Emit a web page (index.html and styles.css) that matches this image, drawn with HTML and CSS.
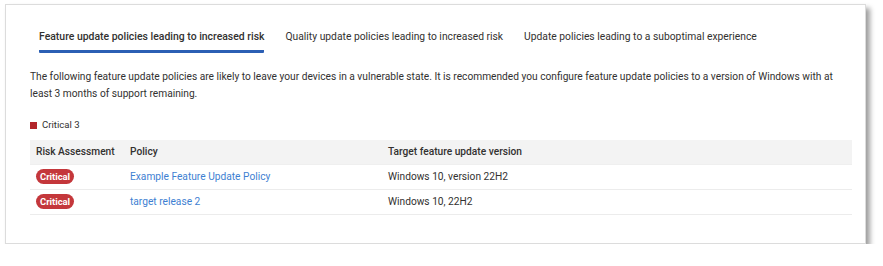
FILE: index.html
```html
<!DOCTYPE html>
<html lang="en">
<head>
<meta charset="utf-8">
<title>Feature update policies</title>
<link rel="stylesheet" href="styles.css">
</head>
<body>
<div class="card">
  <div class="tabs">
    <div class="tab active">Feature update policies leading to increased risk</div>
    <div class="tab">Quality update policies leading to increased risk</div>
    <div class="tab">Update policies leading to a suboptimal experience</div>
  </div>
  <p class="desc">The following feature update policies are likely to leave your devices in a vulnerable state. It is recommended you configure feature update policies to a version of Windows with at least 3 months of support remaining.</p>
  <div class="legend"><span class="swatch"></span>Critical 3</div>
  <table class="grid">
    <colgroup>
      <col class="c1"><col class="c2"><col class="c3">
    </colgroup>
    <thead>
      <tr><th>Risk Assessment</th><th>Policy</th><th>Target feature update version</th></tr>
    </thead>
    <tbody>
      <tr><td><span class="badge">Critical</span></td><td><a class="link" href="#">Example Feature Update Policy</a></td><td>Windows 10, version 22H2</td></tr>
      <tr><td><span class="badge">Critical</span></td><td><a class="link" href="#">target release 2</a></td><td>Windows 10, 22H2</td></tr>
    </tbody>
  </table>
</div>
</body>
</html>
```

FILE: styles.css
```css
html, body {
  margin: 0;
  padding: 0;
  background: #ffffff;
}
body {
  font-family: Roboto, "Open Sans", "Liberation Sans", sans-serif;
  color: #323130;
  font-size: 10.2px;
}
.card {
  box-sizing: border-box;
  margin: 4px 0 0 5px;
  width: 861px;
  height: 240px;
  border: 1px solid #dcdcdc;
  background: #fff;
  box-shadow: 4px 4px 5px rgba(0, 0, 0, 0.38);
  padding: 0 13px 0 24px;
}
.tabs {
  display: flex;
  gap: 21px;
  margin-left: 9px;
  padding-top: 23px;
}
.tab {
  font-size: 10.3px;
  line-height: 18px;
  padding-bottom: 4px;
  border-bottom: 3px solid transparent;
  color: #323130;
  white-space: nowrap;
}
.tab.active {
  font-size: 10.45px;
  font-weight: 500;
  border-bottom-color: #2b5fb4;
  border-radius: 1px;
}
.desc {
  margin: 15px 0 0 0;
  line-height: 17px;
}
.legend {
  margin-top: 16px;
  font-size: 9.6px;
  line-height: 14px;
  display: flex;
  align-items: center;
  gap: 5px;
}
.swatch {
  width: 7px;
  height: 7px;
  background: #b3262b;
}
.grid {
  margin-top: 8px;
  width: 822px;
  border-collapse: collapse;
  table-layout: fixed;
}
.c1 { width: 94px; }
.c2 { width: 258px; }
.grid th {
  background: #f3f3f3;
  text-align: left;
  font-weight: 500;
  height: 24px;
  padding: 0 6px;
  border-bottom: 1px solid #efefef;
  box-sizing: border-box;
  white-space: nowrap;
}
.grid td {
  height: 25px;
  padding: 0 6px;
  border-bottom: 1px solid #ececec;
  box-sizing: border-box;
}
.badge {
  display: inline-block;
  background: #c4373b;
  color: #fff;
  font-size: 9.4px;
  font-weight: 700;
  line-height: 15px;
  padding: 0 4px;
  border-radius: 8px;
}
.link {
  color: #3e7fd2;
  text-decoration: none;
}
```
